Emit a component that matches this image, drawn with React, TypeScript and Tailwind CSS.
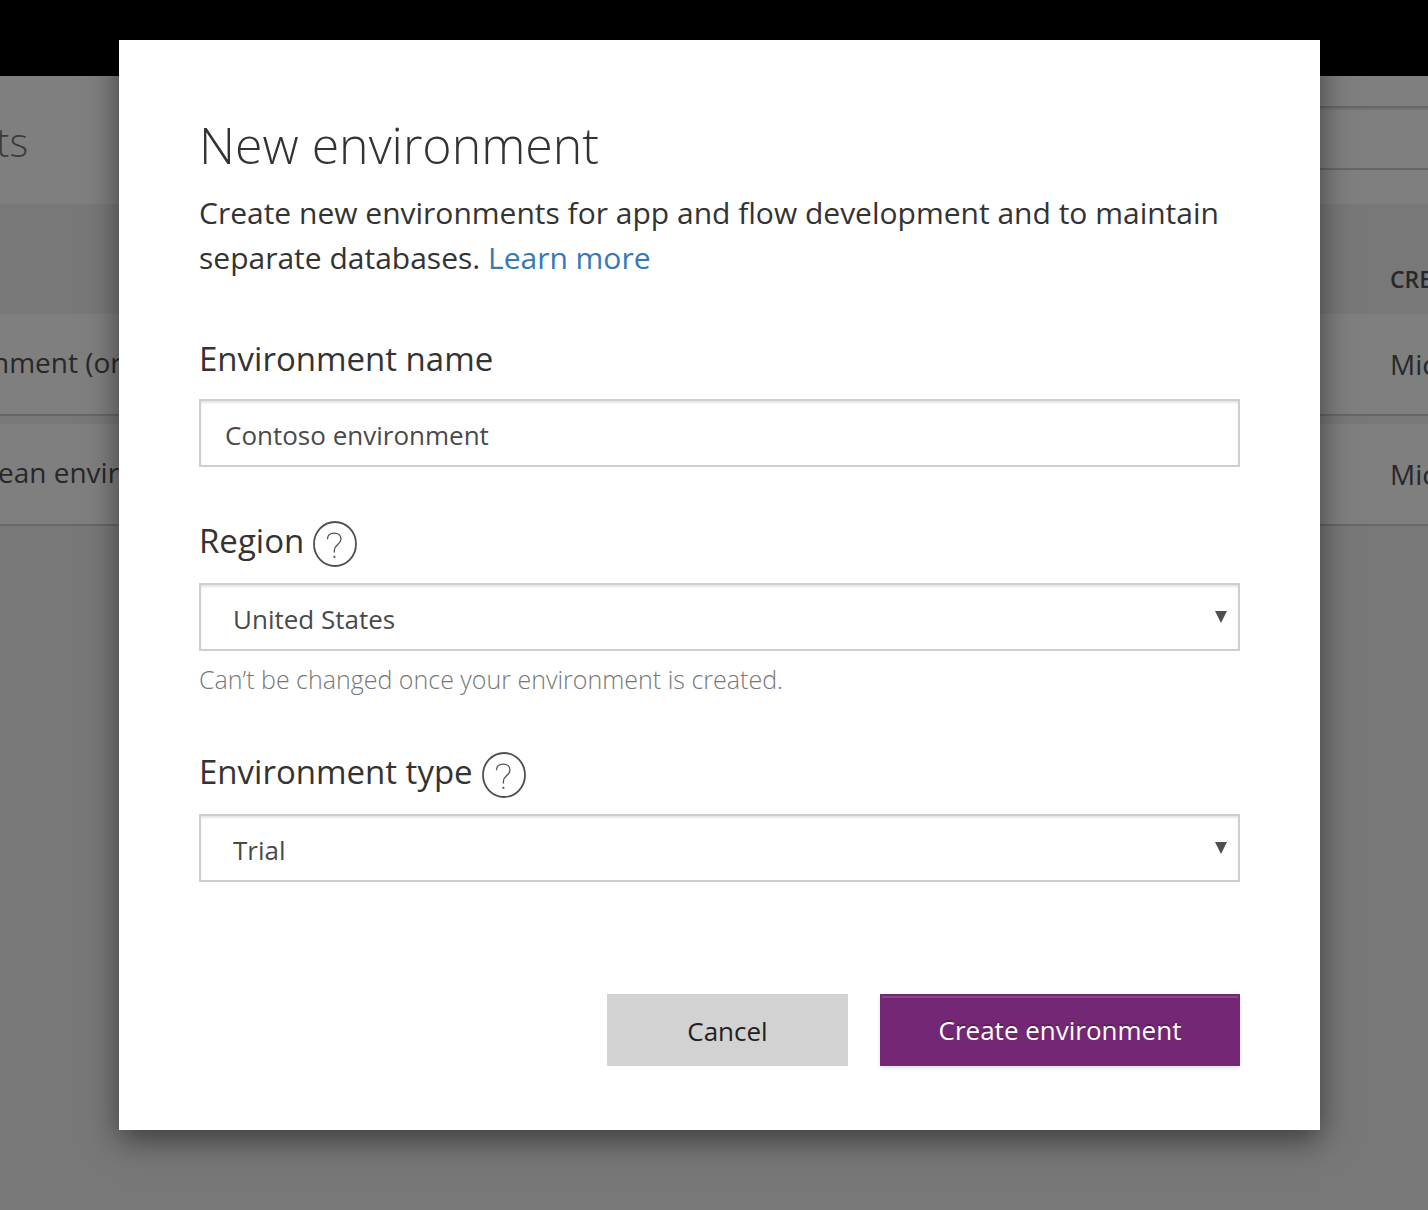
import { Fragment, useState, type ReactNode } from "react";

function HelpButton({ label }: { label: string }) {
  return (
    <button type="button" aria-label={label} className="shrink-0 text-[#4f4f4f]">
      <svg width="46" height="48" viewBox="0 0 46 48" fill="none" stroke="currentColor" aria-hidden="true">
        <ellipse cx="23" cy="24" rx="21" ry="22" strokeWidth="1.8" />
        <path d="M15.4 19.3C15.6 15.2 18.4 13.2 22.2 13.2C26.4 13.2 29 15.6 29 19C29 24.6 22.4 24.6 22.4 30.2V32.5" strokeWidth="1.3" />
        <path d="M22.4 35.8V37.8" strokeWidth="1.8" />
      </svg>
    </button>
  );
}

type SelectFieldProps = {
  id: string;
  label: string;
  value: string;
  options: string[];
  children?: ReactNode;
};

function SelectField({ id, label, value, options, children }: SelectFieldProps) {
  const [selected, setSelected] = useState(value);
  return (
    <div>
      <div className="flex items-center gap-2">
        <label htmlFor={id} className="pb-1.5 text-[33px] leading-[44px]">{label}</label>
        <HelpButton label={`${label} help`} />
      </div>
      <div className="relative mt-3.5">
        <select
          id={id}
          value={selected}
          onChange={(e) => setSelected(e.target.value)}
          className="block h-[68px] w-full appearance-none border-2 border-[#cfcfcf] bg-white pt-1 pr-12 pl-8 text-[26px] text-[#4a4a4a] shadow-[inset_0_2px_2px_rgba(0,0,0,0.1)]"
        >
          {options.map((o) => (
            <option key={o}>{o}</option>
          ))}
        </select>
        <svg className="pointer-events-none absolute top-7 right-3 text-[#4f4f4f]" width="14" height="12" viewBox="0 0 14 12" fill="currentColor" aria-hidden="true">
          <path d="M1 0H13L7 12Z" />
        </svg>
      </div>
      {children}
    </div>
  );
}

function EnvironmentsPage() {
  return (
    <div className="min-h-screen overflow-hidden bg-[#f0f0f0]" aria-hidden="true">
      <header className="h-[76px] bg-black" />
      <div className="flex h-32 justify-between bg-white">
        <h2 className="-ml-1 pt-10 text-[40px] leading-[52px] font-light text-[#777]">ts</h2>
        <div className="mt-[30px] -mr-2 h-16 w-80 border-y-2 border-[#cfcfcf] shadow-[inset_0_2px_2px_rgba(0,0,0,0.1)]" />
      </div>
      <table className="w-full border-separate border-spacing-0 text-left">
        <thead>
          <tr className="h-[110px]">
            <th className="p-0" />
            <th className="w-[38px] p-0 pt-10 text-[23px] font-semibold text-[#505050]">
              <div className="w-[38px] overflow-hidden">CRE</div>
            </th>
          </tr>
        </thead>
        <tbody className="text-[28px] leading-[40px] text-[#505050]">
          {["nment (or", "ean envir"].map((name, i) => (
            <Fragment key={name}>
              {i > 0 && (
                <tr className="h-2">
                  <td colSpan={2} className="p-0" />
                </tr>
              )}
              <tr className="h-[102px]">
                <td className="border-b-2 border-[#cfcfcf] bg-white p-0 pb-1">
                  <div className={i === 0 ? "-ml-2" : "-ml-0.5"}>{name}</div>
                </td>
                <td className="w-[38px] border-b-2 border-[#cfcfcf] bg-white p-0">
                  <div className="w-[38px] overflow-hidden">Mic</div>
                </td>
              </tr>
            </Fragment>
          ))}
        </tbody>
      </table>
    </div>
  );
}

export default function App() {
  const [name, setName] = useState("Contoso environment");
  return (
    <div className="relative font-['Open_Sans','Noto_Sans',sans-serif]">
      <EnvironmentsPage />
      <div className="absolute inset-0 bg-black/50 pt-10 pr-[108px] pl-[119px]">
        <form
          role="dialog"
          aria-labelledby="dialog-title"
          onSubmit={(e) => e.preventDefault()}
          className="bg-white px-20 pt-[70px] pb-16 text-[#333] shadow-[0_10px_30px_rgba(0,0,0,0.5)]"
        >
          <h1 id="dialog-title" className="text-[50px] leading-[70px] font-light">New environment</h1>
          <p className="mt-2.5 text-[30px] leading-[45px]">
            Create new environments for app and flow development and to maintain separate databases.{" "}
            <a href="#learn-more" className="text-[#337ab7]">Learn more</a>
          </p>

          <label htmlFor="env-name" className="mt-[57px] block text-[33px] leading-[44px]">Environment name</label>
          <input
            id="env-name"
            value={name}
            onChange={(e) => setName(e.target.value)}
            className="mt-[18px] block h-[68px] w-full border-2 border-[#cfcfcf] px-6 pt-1 text-[26px] text-[#4a4a4a] shadow-[inset_0_2px_2px_rgba(0,0,0,0.1)]"
          />

          <div className="mt-[52px]">
            <SelectField id="region" label="Region" value="United States" options={["United States"]}>
              <p className="mt-2.5 text-[25px] leading-[36px] font-light text-[#777]">
                Can’t be changed once your environment is created.
              </p>
            </SelectField>
          </div>

          <div className="mt-[53px]">
            <SelectField id="env-type" label="Environment type" value="Trial" options={["Trial"]} />
          </div>

          <div className="mt-28 flex justify-end gap-8">
            <button type="button" className="h-[72px] w-[241px] bg-[#d2d2d2] pt-0.5 text-[26px] text-[#212121]">Cancel</button>
            <button
              type="submit"
              className="h-[72px] w-[360px] border-2 border-[#742774] bg-[#742774] text-[26px] text-white shadow-[inset_0_2px_0_rgba(255,255,255,0.15),0_2px_4px_rgba(0,0,0,0.12)] [text-shadow:0_-2px_0_rgba(0,0,0,0.2)]"
            >
              Create environment
            </button>
          </div>
        </form>
      </div>
    </div>
  );
}
